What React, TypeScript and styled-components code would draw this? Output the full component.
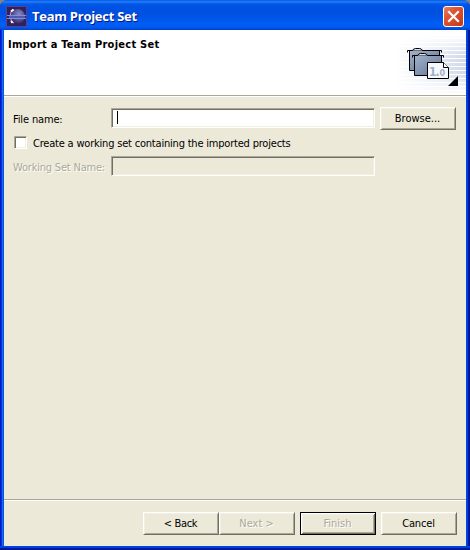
import React from "react";
import styled, { createGlobalStyle, css } from "styled-components";

const Global = createGlobalStyle`
  body { margin: 0; background: #8a8577; overflow: hidden; }
  * { box-sizing: border-box; }
`;

const Window = styled.div`
  width: 470px;
  height: 550px;
  display: flex;
  flex-direction: column;
  border-radius: 7px 7px 0 0;
  overflow: hidden;
  background: linear-gradient(90deg, #0019cf 0, #0019cf 1px, #0831d9 1px, #0831d9 2px, #166aee 2px, #166aee 3px, #0855dd 3px, #0855dd 466px, #0046e5 466px, #0046e5 467px, #003ddc 467px, #003ddc 468px, #0020a8 468px, #00138c 470px);
  font-family: "DejaVu Sans Condensed", "DejaVu Sans", sans-serif;
  font-stretch: condensed;
  font-size: 11px;
  line-height: 13px;
  color: #000;
`;

const TitleBar = styled.div`
  flex: none;
  height: 30px;
  display: flex;
  align-items: center;
  padding: 2px 6px 0 6px;
  background: linear-gradient(180deg, #0058e6 0, #2a83f8 2px, #0a63ee 3px, #0054e3 5px, #0050e0 12px, #0055e8 18px, #005df5 24px, #005bf0 27px, #0042cf 30px);
`;

const Title = styled.div`
  flex: 1;
  margin-left: 5px;
  font: bold 13px/18px "Open Sans", sans-serif;
  letter-spacing: -0.27px;
  color: #fff;
  text-shadow: 1px 1px 0 #0a1883;
  white-space: nowrap;
`;

const Body = styled.div`
  flex: none;
  width: 462px;
  height: 516px;
  margin-left: 4px;
  display: flex;
  flex-direction: column;
  background: #ece9d8;
`;

const Bottom = styled.div`
  height: 4px;
  background: linear-gradient(180deg, #0046e5 0, #003ddc 2px, #0020a8 2px, #00138c 4px);
`;

const Banner = styled.div`
  height: 65px;
  display: flex;
  justify-content: space-between;
  background: #fff;
`;

const Heading = styled.div`
  margin: 8px 0 0 4px;
  font-weight: bold;
  letter-spacing: 0.25px;
  white-space: nowrap;
`;

const Rule = styled.div`
  flex: none;
  height: 2px;
  background: #aca899;
  border-bottom: 1px solid #fff;
`;

const Form = styled.div`
  flex: 1;
  padding: 10px 0 0 9px;
`;

const Row = styled.div<{ $height: number; $gap?: number }>`
  display: flex;
  align-items: center;
  height: ${(p) => p.$height}px;
  margin-top: ${(p) => p.$gap ?? 0}px;
`;

const disabledText = css`
  color: #aca899;
  text-shadow: 1px 1px 0 #fff;
`;

const Label = styled.label<{ $spacing: number; $width?: number; $disabled?: boolean }>`
  width: ${(p) => (p.$width ? `${p.$width}px` : "auto")};
  padding-top: 2px;
  letter-spacing: ${(p) => p.$spacing}px;
  white-space: nowrap;
  ${(p) => p.$disabled && disabledText}
`;

const Field = styled.div<{ $disabled?: boolean }>`
  width: 264px;
  height: 20px;
  padding: 2px 0 0 4px;
  border: 1px solid;
  border-color: #aca899 #fff #fff #aca899;
  box-shadow: inset 1px 1px 0 #716f64, inset -1px -1px 0 #f1efe2;
  background: ${(p) => (p.$disabled ? "#ece9d8" : "#fff")};
`;

const FieldSlot = styled.div`
  align-self: flex-start;
  padding-top: 1px;
`;

const Caret = styled.div`
  width: 1px;
  height: 13px;
  margin-left: 1px;
  background: #000;
`;

const CheckBox = styled.div`
  width: 13px;
  height: 13px;
  margin: 0 6px 0 1px;
  border: 1px solid;
  border-color: #aca899 #fff #fff #aca899;
  box-shadow: inset 1px 1px 0 #716f64, inset -1px -1px 0 #f1efe2;
  background: #fff;
`;

const Button = styled.button<{ $spacing?: number; $left?: number; $primary?: boolean }>`
  width: 76px;
  height: 23px;
  margin: 0 0 0 ${(p) => p.$left ?? 0}px;
  padding: 0 1px 1px 0;
  border: 1px solid;
  border-color: ${(p) => (p.$primary ? "#000" : "#fff #716f64 #716f64 #fff")};
  border-radius: 0;
  background: #ece9d8;
  box-shadow: ${(p) =>
    p.$primary
      ? "inset 1px 1px 0 #fff, inset -1px -1px 0 #716f64, inset 2px 2px 0 #f1efe2, inset -2px -2px 0 #aca899"
      : "inset 1px 1px 0 #f1efe2, inset -1px -1px 0 #aca899"};
  font: inherit;
  letter-spacing: ${(p) => p.$spacing ?? 0}px;
  color: #000;
  &:disabled { ${disabledText} }
`;

const Footer = styled.div`
  flex: none;
  height: 45px;
  padding: 11px 9px 0 0;
  display: flex;
  justify-content: flex-end;
`;

const EclipseIcon = () => (
  <svg width="21" height="21" viewBox="0 0 21 21">
    <defs>
      <radialGradient id="orb" cx=".6" cy=".35" r=".65">
        <stop offset="0" stopColor="#8a8ac8" />
        <stop offset=".55" stopColor="#5a5894" />
        <stop offset="1" stopColor="#2d2459" />
      </radialGradient>
    </defs>
    <rect width="21" height="21" fill="#58428b" />
    <rect x="1" y="1" width="19" height="19" fill="#30205e" />
    <circle cx="11.5" cy="10.5" r="7.500" fill="url(#orb)" />
    <path d="M8 3.500C4.500 5 4 8 4.500 11c0 3 1.500 5 3.500 6" fill="none" stroke="#a695cc" strokeWidth="1.200" />
    <path d="M5 5.500L7.500 3.500M5 15l1.500 2" stroke="#fff" strokeWidth="1.800" />
    <path d="M1 9.500h19M1 12.500h19" stroke="#7d8ede" />
    <path d="M3 11h16" stroke="#515aae" strokeWidth="2" />
  </svg>
);

const CloseIcon = () => (
  <svg width="21" height="21" viewBox="0 0 21 21">
    <defs>
      <linearGradient id="close" x2="1" y2="1">
        <stop offset="0" stopColor="#ea8668" />
        <stop offset=".35" stopColor="#de5538" />
        <stop offset="1" stopColor="#c23713" />
      </linearGradient>
    </defs>
    <rect x=".5" y=".5" width="20" height="20" rx="2.500" fill="url(#close)" stroke="#fff" />
    <path d="M6 6l9 9M15 6l-9 9" stroke="#fff" strokeWidth="2.200" strokeLinecap="square" />
  </svg>
);

const ProjectSetArt = () => (
  <svg width="80" height="65" viewBox="0 0 80 65">
    <defs>
      <linearGradient id="fade" gradientUnits="userSpaceOnUse" x1="10" x2="80" y1="0" y2="0">
        <stop offset="0" stopColor="#c8d2e6" stopOpacity="0" />
        <stop offset="1" stopColor="#c8d2e6" stopOpacity=".85" />
      </linearGradient>
      <linearGradient id="vertical" x2="0" y2="1">
        <stop offset=".08" stopColor="#000" />
        <stop offset=".4" stopColor="#fff" />
        <stop offset=".65" stopColor="#fff" />
        <stop offset="1" stopColor="#000" />
      </linearGradient>
      <mask id="stripes"><rect width="80" height="65" fill="url(#vertical)" /></mask>
      <linearGradient id="bin" x2="1" y2="1">
        <stop offset="0" stopColor="#a3b3cd" />
        <stop offset="1" stopColor="#607391" />
      </linearGradient>
    </defs>
    <g mask="url(#stripes)">
      {Array.from({ length: 15 }, (_, i) => (
        <rect key={i} x="5" y={5 + i * 4} width="75" height="3" fill="url(#fade)" />
      ))}
    </g>
    <g fill="url(#bin)" stroke="#000">
      <path d="M23.500 20.500v20h30v-20z" />
      <path d="M21.500 22.500v-2h34v2" fill="none" />
      <path d="M26.500 20.500q1-2 3-2h4q2 0 3 2" fill="#dce3ee" />
      <path d="M28.500 25.500v20h27v-20z" />
      <path d="M26.500 27.500v-2h31v2" fill="none" />
      <path d="M31.500 25.500q1-2 3-2h4q2 0 3 2" fill="#dce3ee" />
    </g>
    <path d="M41.500 32.500h16l5 5v11h-21z" fill="#f6f8fc" stroke="#000" />
    <path d="M57.500 32.500v5h5" fill="#fff" stroke="#000" />
    <text x="43" y="46" fontFamily="DejaVu Sans, sans-serif" fontWeight="bold" fontSize="12" letterSpacing="-1" fill="#a2b0c6">1.</text>
    <text x="53.500" y="46" fontFamily="DejaVu Sans, sans-serif" fontWeight="bold" fontSize="9" fill="#a2b0c6">0</text>
    <path d="M72 46v10H62z" />
  </svg>
);

export default function App() {
  return (
    <>
      <Global />
      <Window>
        <TitleBar>
          <EclipseIcon />
          <Title>Team Project Set</Title>
          <CloseIcon />
        </TitleBar>
        <Body>
          <Banner>
            <Heading>Import a Team Project Set</Heading>
            <ProjectSetArt />
          </Banner>
          <Rule />
          <Form>
            <Row $height={23}>
              <Label $spacing={-0.15} $width={98}>File name:</Label>
              <FieldSlot><Field><Caret /></Field></FieldSlot>
              <Button $left={5}>Browse...</Button>
            </Row>
            <Row $height={13} $gap={6}>
              <CheckBox />
              <Label $spacing={-0.2}>Create a working set containing the imported projects</Label>
            </Row>
            <Row $height={20} $gap={7}>
              <Label $spacing={-0.2} $width={98} $disabled>Working Set Name:</Label>
              <Field $disabled />
            </Row>
          </Form>
          <Rule />
          <Footer>
            <Button $spacing={-0.35}>&lt; Back</Button>
            <Button disabled>Next &gt;</Button>
            <Button $left={5} $primary disabled>Finish</Button>
            <Button $left={5} $spacing={-0.15}>Cancel</Button>
          </Footer>
        </Body>
        <Bottom />
      </Window>
    </>
  );
}
